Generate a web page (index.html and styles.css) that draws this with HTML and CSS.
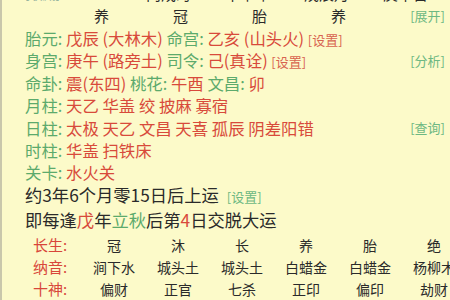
FILE: index.html
```html
<!DOCTYPE html>
<html lang="zh">
<head>
    <meta charset="UTF-8">
    <meta name="viewport" content="width=device-width, initial-scale=1.0">
    <title>排盘</title>
    <link rel="stylesheet" href="styles.css">
</head>
<body>
    <div class="page">
        <div class="row head cut">
            <span class="tag grey">[收藏]</span>
            <div class="cells">
                <span>丙戌时</span><span>甲申年</span><span>戊辰月</span><span>庚午日</span>
            </div>
        </div>
        <div class="row head">
            <div class="cells lead">
                <span>养</span><span>冠</span><span>胎</span><span>养</span>
            </div>
            <span class="tag">[展开]</span>
        </div>

        <div class="row">
            <div class="line">
                <span class="k">胎元:</span> <span class="v">戊辰 (大林木)</span>
                <span class="k">命宫:</span> <span class="v">乙亥 (山头火)</span>
                <span class="tag red">[设置]</span>
            </div>
        </div>
        <div class="row">
            <div class="line">
                <span class="k">身宫:</span> <span class="v">庚午 (路旁土)</span>
                <span class="k">司令:</span> <span class="v">己(真诠)</span>
                <span class="tag red">[设置]</span>
            </div>
            <span class="tag">[分析]</span>
        </div>
        <div class="row">
            <div class="line">
                <span class="k">命卦:</span> <span class="v">震(东四)</span>
                <span class="k">桃花:</span> <span class="v">午酉</span>
                <span class="k">文昌:</span> <span class="v">卯</span>
            </div>
        </div>
        <div class="row">
            <div class="line"><span class="k">月柱:</span> <span class="v">天乙 华盖 绞 披麻 寡宿</span></div>
        </div>
        <div class="row low">
            <div class="line"><span class="k">日柱:</span> <span class="v">太极 天乙 文昌 天喜 孤辰 阴差阳错</span></div>
            <span class="tag">[查询]</span>
        </div>
        <div class="row">
            <div class="line"><span class="k">时柱:</span> <span class="v">华盖 扫铁床</span></div>
        </div>
        <div class="row">
            <div class="line"><span class="k">关卡:</span> <span class="v">水火关</span></div>
        </div>

        <div class="row plain">
            <div class="line">约3年6个月零15日后上运 <span class="tag">[设置]</span></div>
        </div>
        <div class="row plain">
            <div class="line">即每逢<span class="v">戊</span>年<span class="k">立秋</span>后第<span class="v">4</span>日交脱大运</div>
        </div>

        <div class="luck">
            <span class="lbl">长生:</span>
            <span>冠</span><span>沐</span><span>长</span><span>养</span><span>胎</span><span>绝</span>
            <span class="lbl">纳音:</span>
            <span>涧下水</span><span>城头土</span><span>城头土</span><span>白蜡金</span><span>白蜡金</span><span>杨柳木</span>
            <span class="lbl">十神:</span>
            <span>偏财</span><span>正官</span><span>七杀</span><span>正印</span><span>偏印</span><span>劫财</span>
            <span class="lbl">藏干:</span>
            <span>庚</span><span>辛</span><span>甲</span><span>丙</span><span>庚</span><span>壬</span>
        </div>
    </div>
</body>
</html>
```

FILE: styles.css
```css
html, body {
    margin: 0;
    padding: 0;
    background-color: #fcfac9;
    overflow: hidden;
}
body {
    font-family: "Noto Sans CJK SC", "Noto Sans", sans-serif;
    font-size: 16.4px;
    color: #2a2a2a;
    border-left: 2px solid #c9c7ab;
    height: 300px;
    box-sizing: border-box;
}
.page {
    margin-top: -17px;
    padding-left: 23px;
    padding-right: 5px;
}
.row {
    display: flex;
    justify-content: space-between;
    align-items: center;
    height: 22.25px;
    line-height: 22px;
    white-space: nowrap;
}
.row.low {
    align-items: flex-end;
}
.row.plain {
    font-size: 17.3px;
    margin-top: 1.5px;
}
.row.plain .tag {
    margin-left: 4px;
}
.head .cells {
    display: grid;
    grid-template-columns: repeat(4, 79px);
    text-align: center;
    font-size: 15px;
}
.head .cells.lead {
    margin-left: 37px;
}
.head.cut .cells {
    margin-left: 26px;
}
.k {
    color: #5caa6c;
}
.v {
    color: #d84a3b;
}
.tag {
    font-size: 13px;
    color: #6db882;
}
.tag.grey {
    color: #8eae9a;
}
.tag.red {
    color: #d8634f;
}
.luck {
    display: grid;
    grid-template-columns: 49px repeat(6, 64px);
    margin-top: 3px;
    margin-left: 8px;
    font-size: 14px;
    line-height: 22px;
    text-align: center;
    white-space: nowrap;
}
.luck .lbl {
    text-align: left;
    font-size: 15px;
    color: #d8463a;
}
```
